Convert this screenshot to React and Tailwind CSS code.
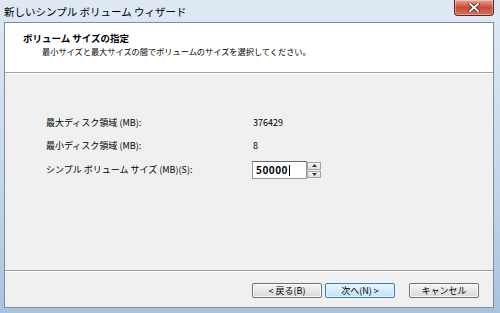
import React from "react";

const font = { fontFamily: '"Noto Sans CJK JP", "Noto Sans", sans-serif' };

function WinButton({ children, focused }) {
  return (
    <div
      className={
        "w-[70px] h-[15px] rounded-[2px] border flex items-center justify-center text-[9px] leading-none text-black " +
        (focused
          ? "border-[#3c7fb1] bg-gradient-to-b from-[#eaf6fd] to-[#bfe3f8] shadow-[inset_0_0_0_1px_#e4f3fc]"
          : "border-[#707070] bg-gradient-to-b from-[#f4f4f4] to-[#d9d9d9] shadow-[inset_0_0_0_1px_#fcfcfc]")
      }
    >
      {children}
    </div>
  );
}

function Row({ label, children, className }) {
  return (
    <div className={"flex items-center " + (className || "")}>
      <div className="w-[207px] text-[9px] leading-[12px] text-black">{label}</div>
      <div className="text-[9px] leading-[12px] text-black">{children}</div>
    </div>
  );
}

export default function App() {
  return (
    <div
      className="w-[500px] h-[313px] flex flex-col bg-gradient-to-b from-[#dfe9f4] via-[#c8daec] to-[#a9c3de] overflow-hidden"
      style={font}
    >
      {/* title bar */}
      <div className="h-[22px] flex items-start shrink-0">
        <div className="pl-[4px] pt-[6px] text-[10.5px] leading-[12px] text-black">
          新しいシンプル ボリューム ウィザード
        </div>
        <div className="ml-auto mr-[6px] w-[40px] h-[16px] rounded-b-[4px] border border-t-0 border-[#5a2a2a] bg-gradient-to-b from-[#e8a394] via-[#c9493a] to-[#d9715c] flex items-center justify-center shadow-[inset_0_0_0_1px_rgba(255,255,255,0.35)]">
          <svg width="12" height="9" viewBox="0 0 12 9">
            <path
              d="M2 1 L10 8 M10 1 L2 8"
              stroke="#3b1a1a"
              strokeWidth="3.4"
              strokeLinecap="square"
            />
            <path
              d="M2 1 L10 8 M10 1 L2 8"
              stroke="#ffffff"
              strokeWidth="2"
              strokeLinecap="square"
            />
          </svg>
        </div>
      </div>

      {/* client area */}
      <div className="mx-[4px] mr-[6px] h-[286px] flex flex-col border border-[#7d8d9f] bg-[#f0f0f0]">
        {/* header */}
        <div className="h-[50px] shrink-0 bg-white border-b border-[#a0a0a0] pt-[9px] pl-[18px]">
          <div className="text-[9.5px] leading-[12px] font-bold text-black">
            ボリューム サイズの指定
          </div>
          <div className="pl-[19px] mt-[2px] text-[8.2px] leading-[11px] text-black">
            最小サイズと最大サイズの間でボリュームのサイズを選択してください。
          </div>
        </div>
        <div className="h-px bg-white shrink-0" />

        {/* content */}
        <div className="flex-1 pl-[41px] pt-[43px]">
          <Row label="最大ディスク領域 (MB):">376429</Row>
          <Row label="最小ディスク領域 (MB):" className="mt-[11px]">
            8
          </Row>
          <div className="flex items-center mt-[9px]">
            <div className="w-[206px] text-[9px] leading-[12px] text-black">
              シンプル ボリューム サイズ (MB)(S):
            </div>
            <div className="flex items-stretch h-[18px]">
              <div className="w-[55px] border border-[#8e9aa8] border-t-[#5c6b7a] bg-white flex items-center pl-[3px]">
                <span className="text-[10px] leading-none text-black font-semibold tracking-[0.5px]">
                  50000
                </span>
                <span className="w-px h-[11px] bg-black ml-[1px]" />
              </div>
              <div className="w-[14px] flex flex-col gap-[1px] py-[1px]">
                <div className="flex-1 border border-[#a5a5a5] bg-gradient-to-b from-[#f6f6f6] to-[#dedede] flex items-center justify-center">
                  <svg width="5" height="3" viewBox="0 0 5 3">
                    <path d="M2.5 0 L5 3 L0 3 Z" fill="#333" />
                  </svg>
                </div>
                <div className="flex-1 border border-[#a5a5a5] bg-gradient-to-b from-[#f6f6f6] to-[#dedede] flex items-center justify-center">
                  <svg width="5" height="3" viewBox="0 0 5 3">
                    <path d="M0 0 L5 0 L2.5 3 Z" fill="#333" />
                  </svg>
                </div>
              </div>
            </div>
          </div>
        </div>

        {/* footer */}
        <div className="h-px bg-[#a0a0a0] shrink-0" />
        <div className="h-px bg-white shrink-0" />
        <div className="h-[35px] shrink-0 flex items-start pt-[11px] pl-[247px]">
          <WinButton>&lt; 戻る(B)</WinButton>
          <div className="ml-[3px]">
            <WinButton focused>次へ(N) &gt;</WinButton>
          </div>
          <div className="ml-[14px]">
            <WinButton>キャンセル</WinButton>
          </div>
        </div>
      </div>
    </div>
  );
}
